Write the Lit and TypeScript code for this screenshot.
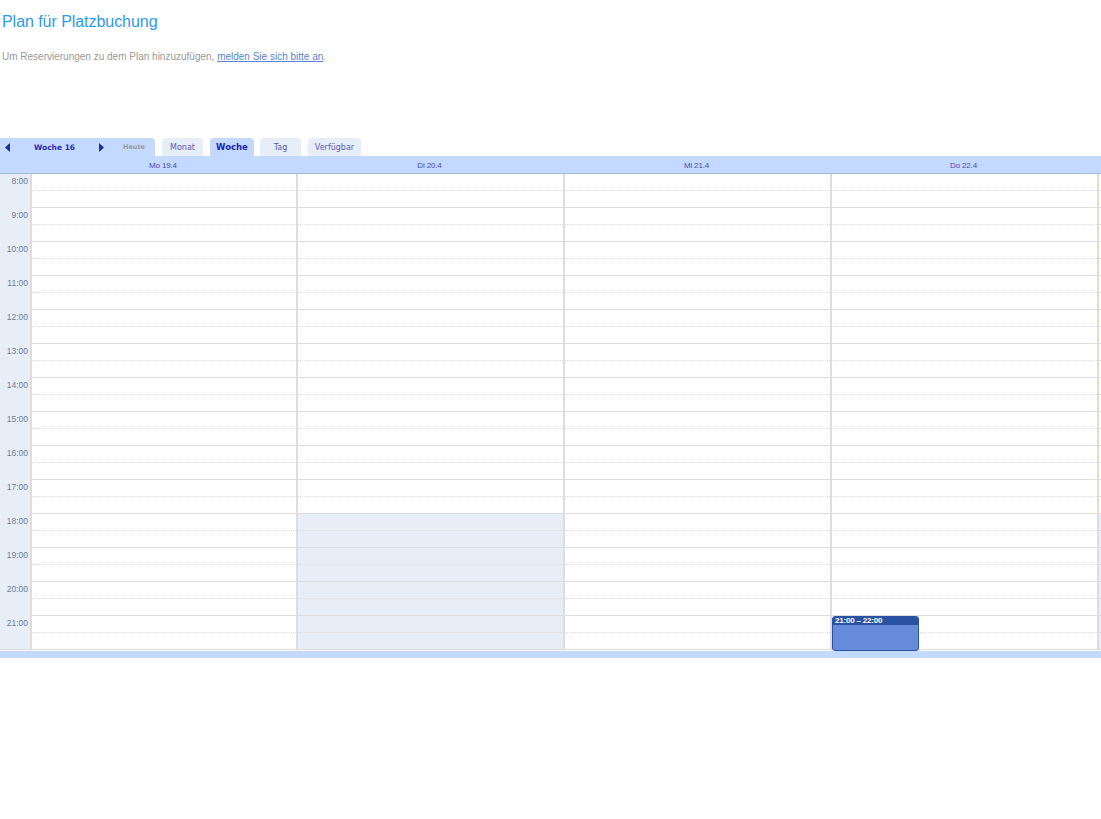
import { LitElement, html, css } from "lit";
import { customElement } from "lit/decorators.js";

const HOURS = [8, 9, 10, 11, 12, 13, 14, 15, 16, 17, 18, 19, 20, 21];
const DAYS = ["Mo 19.4", "Di 20.4", "Mi 21.4", "Do 22.4"];

@customElement("app-root")
export class AppRoot extends LitElement {
  static styles = css`
    :host { display: block; font-family: "Liberation Sans", Arial, sans-serif; background: #fff; min-height: 819px; overflow: hidden; }
    h1 { margin: 0; padding: 13px 0 0 2px; font-size: 16px; line-height: 17px; font-weight: 400; color: #2e9ae8; letter-spacing: -0.05px; }
    .notice { margin: 0; padding: 20px 0 0 2px; font-size: 10px; line-height: 13px; color: #999; height: 88px; }
    .notice a { color: #5b85d0; text-decoration: underline; }
    .tabs { display: flex; align-items: flex-end; height: 18px; font-family: "DejaVu Sans", Verdana, sans-serif; font-size: 8px; }
    .nav { width: 155px; height: 18px; background: #c3d9ff; border-radius: 0 4px 0 0; display: flex; align-items: center; color: #2a2ab0; }
    .arrow { display: block; }
    .nav .prev { margin-left: 5px; }
    .nav .week { margin-left: 24px; width: 65px; font-weight: 700; font-size: 7.5px; white-space: nowrap; }
    .nav .today { margin-left: 19px; font-weight: 700; font-size: 6.5px; color: #999; }
    .tab { height: 18px; margin-left: 7px; background: #e8eef7; color: #5a5ab5; border-radius: 4px 4px 0 0; display: flex; align-items: center; justify-content: center; box-sizing: border-box; font-size: 8px; }
    .tab.active { background: #c3d9ff; color: #2222aa; font-weight: 700; font-size: 8.5px; }
    .monat { width: 41px; }
    .woche { width: 44px; }
    .tag { width: 41px; margin-left: 6px; }
    .verf { width: 53px; }
    .head { display: grid; grid-template-columns: 32px 266px 267px 267px 267px 1fr; height: 18px; background: #c3d9ff; border-bottom: 1px solid #a2bbdd; box-sizing: border-box; font-size: 8px; letter-spacing: -0.15px; color: #4a4ab0; }
    .head div { text-align: center; line-height: 20px; padding-right: 4px; }
    .grid { display: grid; grid-template-columns: 32px 266px 267px 267px 267px 1fr; height: 476px; margin-bottom: 1px; }
    .gutter { background: #e8eef7; border-right: 2px solid #ddd; }
    .hour { height: 34px; box-sizing: border-box; text-align: right; padding: 2px 2px 0 0; font-size: 8.5px; line-height: 10px; color: #6b7a99; }
    .hour:last-child { border-bottom: 1px solid #ddd; margin-right: -2px; padding-right: 4px; }
    .day { position: relative; border-right: 2px solid #ddd; }
    .slot { height: 34px; box-sizing: border-box; border-bottom: 1px solid #ddd; }
    .half { height: 17px; box-sizing: border-box; border-bottom: 1px dotted #ddd; }
    .slot.busy { background: #e8eef7; }
    .tail .slot { background: #fffde6; border-bottom: 1px solid #ddd; }
    .tail .slot.busy { background: #e8eef7; }
    .event { position: absolute; left: 0; top: 442px; width: 87px; height: 35px; box-sizing: border-box; background: #668cd9; border: 1px solid #2952a3; border-radius: 3px; color: #fff; overflow: hidden; }
    .event-title { background: #2952a3; height: 8px; font-size: 8px; line-height: 8px; font-weight: 700; letter-spacing: -0.2px; padding-left: 2px; white-space: nowrap; }
    .band { height: 7px; background: #c3d9ff; }
  `;

  private slots(from: number) {
    return HOURS.map(
      (h) => html`<div class="slot ${h >= from ? "busy" : ""}"><div class="half"></div></div>`
    );
  }

  render() {
    return html`
      <h1>Plan für Platzbuchung</h1>
      <p class="notice">Um Reservierungen zu dem Plan hinzuzufügen, <a href="#">melden Sie sich bitte an</a>.</p>
      <div class="tabs">
        <div class="nav">
          <svg class="arrow prev" width="5" height="9" viewBox="0 0 5 9"><path d="M5 0V9L0 4.5Z" fill="#1a2f9e"/></svg>
          <span class="week">Woche 16</span>
          <svg class="arrow next" width="5" height="9" viewBox="0 0 5 9"><path d="M0 0V9L5 4.5Z" fill="#1a2f9e"/></svg>
          <span class="today">Heute</span>
        </div>
        <div class="tab monat">Monat</div>
        <div class="tab woche active">Woche</div>
        <div class="tab tag">Tag</div>
        <div class="tab verf">Verfügbar</div>
      </div>
      <div class="head">
        <div></div>
        ${DAYS.map((d) => html`<div>${d}</div>`)}
        <div></div>
      </div>
      <div class="grid">
        <div class="gutter">${HOURS.map((h) => html`<div class="hour">${h}:00</div>`)}</div>
        <div class="day">${this.slots(99)}</div>
        <div class="day">${this.slots(18)}</div>
        <div class="day">${this.slots(99)}</div>
        <div class="day">
          ${this.slots(99)}
          <div class="event"><div class="event-title">21:00 – 22:00</div></div>
        </div>
        <div class="tail">${this.slots(18)}</div>
      </div>
      <div class="band"></div>
    `;
  }
}
